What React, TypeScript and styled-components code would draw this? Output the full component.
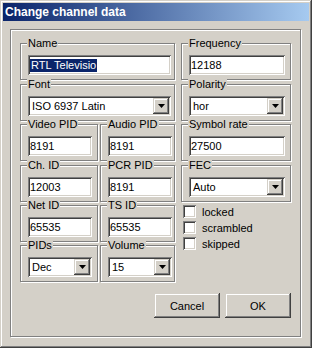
import styled, { createGlobalStyle } from 'styled-components'

const GlobalStyle = createGlobalStyle`
  html, body {
    margin: 0;
    padding: 0;
    background: #d4d0c8;
  }
  body {
    font-family: "Liberation Sans", Arial, sans-serif;
    font-size: 11px;
    color: #000;
  }
`

const raised = `
  box-shadow: inset -1px -1px #404040, inset 1px 1px #d4d0c8, inset -2px -2px #808080, inset 2px 2px #fff;
`

const sunken = `
  box-shadow: inset 1px 1px #808080, inset -1px -1px #fff, inset 2px 2px #404040, inset -2px -2px #d4d0c8;
`

const etched = `
  border: 1px solid #808080;
  box-shadow: inset 1px 1px #fff, 1px 1px #fff;
`

const Window = styled.div`
  width: 312px;
  height: 348px;
  box-sizing: border-box;
  padding: 3px;
  background: #d4d0c8;
  display: flex;
  flex-direction: column;
  box-shadow: inset -1px -1px #404040, inset 1px 1px #d4d0c8, inset -2px -2px #808080, inset 2px 2px #fff;
`

const TitleBar = styled.div`
  height: 18px;
  flex: none;
  display: flex;
  align-items: center;
  padding-left: 2px;
  background: linear-gradient(to right, #0a246a, #a6caf0);
  color: #fff;
  font-weight: bold;
  font-size: 12px;
`

const Panel = styled.div`
  flex: 1;
  margin: 8px 8px 8px 7px;
  padding: 13px 0 0 9px;
  ${etched}
  display: grid;
  grid-template-columns: 78px 2px 75px 6px 110px;
  grid-template-rows: 41px 40px 41px 40px 40px 38px auto;
  align-content: start;
`

const Group = styled.div<{ $col: string; $row: number }>`
  position: relative;
  grid-column: ${p => p.$col};
  grid-row: ${p => p.$row};
  height: 37px;
  box-sizing: border-box;
  padding: 11px 0 0 7px;
  ${etched}
`

const Caption = styled.span`
  position: absolute;
  top: -7px;
  left: 6px;
  padding: 0 1px;
  line-height: 13px;
  background: #d4d0c8;
`

const Edit = styled.div<{ $w: number }>`
  width: ${p => p.$w}px;
  height: 20px;
  box-sizing: border-box;
  padding: 0 2px;
  display: flex;
  align-items: center;
  background: #fff;
  white-space: nowrap;
  ${sunken}
`

const Selected = styled.span`
  background: #0a246a;
  color: #fff;
  padding: 0 1px 1px 1px;
`

const Combo = styled.div<{ $w: number }>`
  width: ${p => p.$w}px;
  height: 20px;
  box-sizing: border-box;
  padding: 2px;
  display: flex;
  align-items: stretch;
  justify-content: space-between;
  background: #fff;
  ${sunken}
`

const ComboText = styled.span`
  display: flex;
  align-items: center;
  padding-left: 2px;
  white-space: nowrap;
`

const DropButton = styled.span`
  width: 16px;
  display: flex;
  align-items: center;
  justify-content: center;
  background: #d4d0c8;
  ${raised}
`

const Checks = styled.div`
  grid-column: 5;
  grid-row: 5 / 7;
  display: flex;
  flex-direction: column;
  gap: 3px;
  padding-left: 2px;
`

const CheckRow = styled.label`
  display: flex;
  align-items: center;
  gap: 6px;
  height: 13px;
`

const CheckBox = styled.span`
  width: 13px;
  height: 13px;
  box-sizing: border-box;
  background: #fff;
  ${sunken}
`

const Buttons = styled.div`
  grid-column: 1 / -1;
  grid-row: 7;
  justify-self: end;
  display: flex;
  gap: 5px;
  margin-top: 10px;
`

const Button = styled.button`
  width: 66px;
  height: 25px;
  border: none;
  padding: 0;
  background: #d4d0c8;
  font-family: inherit;
  font-size: 11px;
  color: #000;
  ${raised}
`

const Arrow = () => (
  <svg width="7" height="4" viewBox="0 0 7 4">
    <path d="M0 0h7L3.5 4z" fill="#000" />
  </svg>
)

const Field = ({ label, value, col, row, w }: { label: string; value: string; col: string; row: number; w: number }) => (
  <Group $col={col} $row={row}>
    <Caption>{label}</Caption>
    <Edit $w={w}>{value}</Edit>
  </Group>
)

const Select = ({ label, value, col, row, w }: { label: string; value: string; col: string; row: number; w: number }) => (
  <Group $col={col} $row={row}>
    <Caption>{label}</Caption>
    <Combo $w={w}>
      <ComboText>{value}</ComboText>
      <DropButton><Arrow /></DropButton>
    </Combo>
  </Group>
)

export default function App() {
  return <>
    <GlobalStyle />
    <Window>
      <TitleBar>Change channel data</TitleBar>
      <Panel>
        <Group $col="1 / 4" $row={1}>
          <Caption>Name</Caption>
          <Edit $w={143}><Selected>RTL Televisio</Selected></Edit>
        </Group>
        <Field label="Frequency" value="12188" col="5" row={1} w={96} />
        <Select label="Font" value="ISO 6937 Latin" col="1 / 4" row={2} w={143} />
        <Select label="Polarity" value="hor" col="5" row={2} w={96} />
        <Field label="Video PID" value="8191" col="1" row={3} w={64} />
        <Field label="Audio PID" value="8191" col="3" row={3} w={64} />
        <Field label="Symbol rate" value="27500" col="5" row={3} w={96} />
        <Field label="Ch. ID" value="12003" col="1" row={4} w={64} />
        <Field label="PCR PID" value="8191" col="3" row={4} w={64} />
        <Select label="FEC" value="Auto" col="5" row={4} w={96} />
        <Field label="Net ID" value="65535" col="1" row={5} w={64} />
        <Field label="TS ID" value="65535" col="3" row={5} w={64} />
        <Checks>
          <CheckRow><CheckBox />locked</CheckRow>
          <CheckRow><CheckBox />scrambled</CheckRow>
          <CheckRow><CheckBox />skipped</CheckRow>
        </Checks>
        <Select label="PIDs" value="Dec" col="1" row={6} w={64} />
        <Select label="Volume" value="15" col="3" row={6} w={64} />
        <Buttons>
          <Button>Cancel</Button>
          <Button>OK</Button>
        </Buttons>
      </Panel>
    </Window>
  </>
}
